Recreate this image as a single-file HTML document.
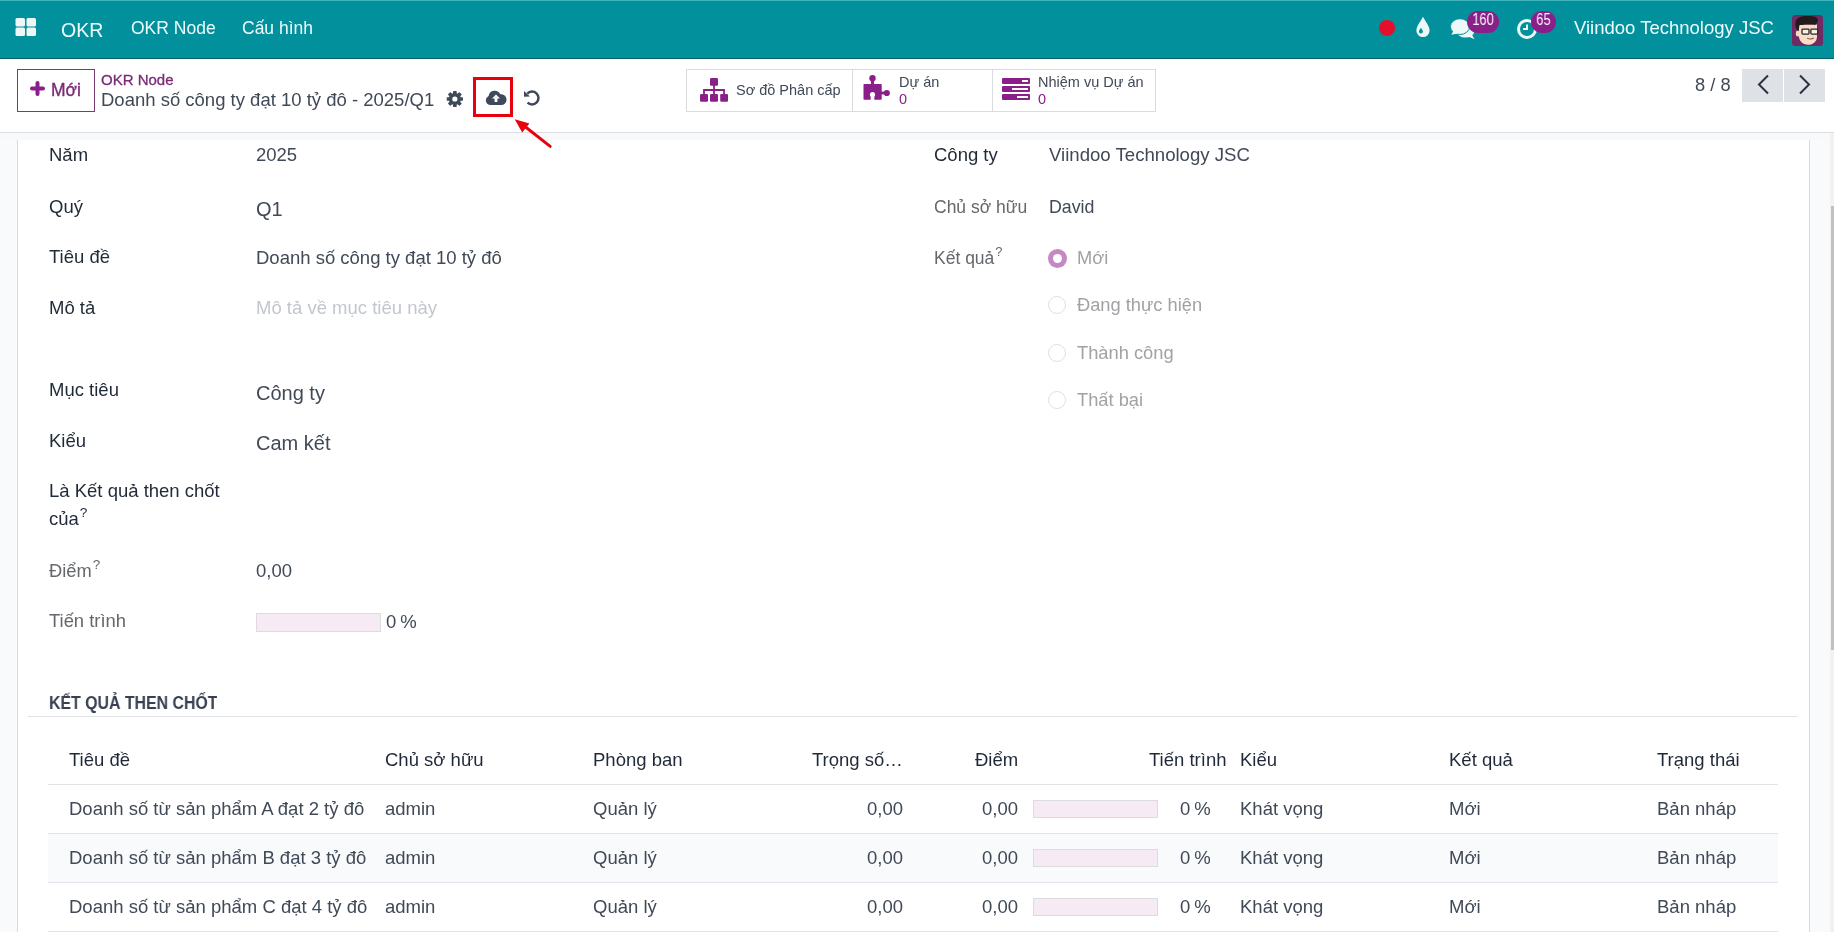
<!DOCTYPE html>
<html><head><meta charset="utf-8"><style>
html,body{margin:0;padding:0;width:1834px;height:932px;overflow:hidden;font-family:'Liberation Sans', sans-serif}
.t{position:absolute;white-space:nowrap;line-height:1;will-change:transform}
sup{font-size:0.74em;vertical-align:0;position:relative;top:-0.62em;margin-left:1px}
</style></head><body>
<div style="position:absolute;left:0px;top:0px;width:1834px;height:932px;background:#f9fafb"></div>
<div style="position:absolute;left:0px;top:0px;width:1834px;height:58px;background:#02909d"></div>
<div style="position:absolute;left:0px;top:0px;width:1834px;height:1px;background:#3db3bb"></div>
<div style="position:absolute;left:0px;top:58px;width:1834px;height:1px;background:#05606a"></div>
<div style="position:absolute;left:0px;top:59px;width:1834px;height:73px;background:#fff"></div>
<div style="position:absolute;left:0px;top:132px;width:1834px;height:1px;background:#dcdde0"></div>
<div style="position:absolute;left:0px;top:133px;width:1834px;height:7px;background:#f8f9fb"></div>
<div style="position:absolute;left:17px;top:140px;width:1793px;height:800px;background:#fff;border-left:1px solid #d8dadd;border-right:1px solid #d8dadd;box-sizing:border-box"></div>
<div style="position:absolute;left:1830px;top:133px;width:4px;height:799px;background:#f1f1f1"></div>
<div style="position:absolute;left:1831px;top:206px;width:3px;height:444px;background:#c1c1c1"></div>
<svg style="position:absolute;left:15px;top:18px" width="22" height="19" viewBox="0 0 22 19"><rect x="0.5" y="0" width="9.5" height="8.5" rx="1.5" fill="#eef6f6"/><rect x="11.5" y="0" width="9.5" height="8.5" rx="1.5" fill="#eef6f6"/><rect x="0.5" y="9.5" width="9.5" height="8.5" rx="1.5" fill="#eef6f6"/><rect x="11.5" y="9.5" width="9.5" height="8.5" rx="1.5" fill="#eef6f6"/></svg>
<div class="t " style="left:61.0px;top:20.9px;font-size:19.5px;color:#eefcfc;font-weight:normal;">OKR</div>
<div class="t " style="left:130.5px;top:20.2px;font-size:17.5px;color:#eefcfc;font-weight:normal;">OKR Node</div>
<div class="t " style="left:241.5px;top:20.2px;font-size:17.5px;color:#eefcfc;font-weight:normal;">Cấu hình</div>
<div style="position:absolute;left:1379px;top:20px;width:16px;height:16px;background:#e3102b;border-radius:50%"></div>
<svg style="position:absolute;left:1415px;top:16px" width="16" height="22" viewBox="0 0 16 22"><path d="M8 0.8 C10 5 14.6 10 14.6 14.5 A6.6 6.6 0 0 1 1.4 14.5 C1.4 10 6 5 8 0.8Z" fill="#eef8f8"/><path d="M5.9 11.8 C6.6 13.3 7.9 14.3 7.9 15.6 A2 2 0 0 1 3.9 15.6 C3.9 14.3 5.2 13.3 5.9 11.8Z" fill="#02909d"/></svg>
<svg style="position:absolute;left:1448px;top:17px" width="30" height="24" viewBox="0 0 30 24"><ellipse cx="17.5" cy="14" rx="8.8" ry="6.6" fill="#eef8f8"/><path d="M19 19 L26.5 22.3 L23.5 17 Z" fill="#eef8f8"/><ellipse cx="12" cy="9.6" rx="9.6" ry="7.9" fill="#eef8f8" stroke="#02909d" stroke-width="1"/><path d="M3.2 17.8 L5.5 14 L10 16.6 Z" fill="#eef8f8"/></svg>
<div style="position:absolute;left:1467px;top:11px;width:32px;height:22px;background:#8a1f8a;border-radius:11px"></div>
<div class="t " style="left:1467.0px;top:12.0px;font-size:16px;color:#fff;font-weight:normal;width:32px;text-align:center;transform:scaleX(0.8)">160</div>
<svg style="position:absolute;left:1516px;top:17px" width="23" height="23" viewBox="0 0 23 23"><circle cx="11" cy="12" r="8.5" fill="none" stroke="#eef6f6" stroke-width="3"/><path d="M11 7.5 V12 H7" fill="none" stroke="#eef6f6" stroke-width="2"/></svg>
<div style="position:absolute;left:1531px;top:11px;width:25px;height:22px;background:#8a1f8a;border-radius:11px"></div>
<div class="t " style="left:1531.0px;top:12.0px;font-size:16px;color:#fff;font-weight:normal;width:25px;text-align:center;transform:scaleX(0.8)">65</div>
<div class="t " style="left:1573.5px;top:19.3px;font-size:18.5px;color:#eefcfc;font-weight:normal;">Viindoo Technology JSC</div>
<svg style="position:absolute;left:1792px;top:14.5px" width="31" height="31" viewBox="1 0.5 31 31"><rect x="1" y="0.5" width="31" height="31" rx="3.5" fill="#702b63"/><ellipse cx="6.8" cy="19" rx="2" ry="3" fill="#f6d9c4"/><path d="M7.8 10 H26 V22 C26 27 22 30.3 17 30.3 C11.5 30.3 7.8 26 7.8 21 Z" fill="#f8dcc6"/><path d="M4.3 10 C4 4 9 1.5 16 1.6 C22 1.5 27 2 27 6 C26 9 25 10.3 24 10.3 C18 9.5 12 10 8.6 10.5 C8 13 7.8 15 7.5 16.8 C6 16 4.6 13 4.3 10 Z" fill="#231a1c"/><rect x="11" y="14.6" width="7" height="5" rx="0.8" fill="#f4f0e8" stroke="#2a2522" stroke-width="1.3"/><rect x="19.9" y="14.6" width="6.8" height="5" rx="0.8" fill="#f4f0e8" stroke="#2a2522" stroke-width="1.3"/><path d="M16.2 23.6 Q19.5 25.6 22.8 23.4" fill="none" stroke="#7b4a42" stroke-width="1.1"/></svg>
<div style="position:absolute;left:17px;top:69px;width:78px;height:43px;border:1px solid #7b3a76;box-sizing:border-box;background:#fff"></div>
<svg style="position:absolute;left:30px;top:81px" width="15" height="15" viewBox="0 0 15 15"><path d="M7.5 2 V13 M2 7.5 H13" stroke="#8a1f8a" stroke-width="4" stroke-linecap="round"/></svg>
<div class="t " style="left:51.0px;top:81.5px;font-size:17.5px;color:#7b2a78;font-weight:normal;-webkit-text-stroke:0.35px #7b2a78">Mới</div>
<div class="t " style="left:101.0px;top:71.6px;font-size:15px;color:#7b2a78;font-weight:normal;-webkit-text-stroke:0.3px #7b2a78">OKR Node</div>
<div class="t " style="left:101.0px;top:90.5px;font-size:18.5px;color:#404957;font-weight:normal;">Doanh số công ty đạt 10 tỷ đô - 2025/Q1</div>
<svg style="position:absolute;left:443px;top:87px" width="24" height="24" viewBox="-11.85 -12 24 24"><circle r="6.1" fill="#3f4a59"/><rect x="-1.8" y="-8.1" width="3.6" height="5" rx="0.6" transform="rotate(0)" fill="#3f4a59"/><rect x="-1.8" y="-8.1" width="3.6" height="5" rx="0.6" transform="rotate(45)" fill="#3f4a59"/><rect x="-1.8" y="-8.1" width="3.6" height="5" rx="0.6" transform="rotate(90)" fill="#3f4a59"/><rect x="-1.8" y="-8.1" width="3.6" height="5" rx="0.6" transform="rotate(135)" fill="#3f4a59"/><rect x="-1.8" y="-8.1" width="3.6" height="5" rx="0.6" transform="rotate(180)" fill="#3f4a59"/><rect x="-1.8" y="-8.1" width="3.6" height="5" rx="0.6" transform="rotate(225)" fill="#3f4a59"/><rect x="-1.8" y="-8.1" width="3.6" height="5" rx="0.6" transform="rotate(270)" fill="#3f4a59"/><rect x="-1.8" y="-8.1" width="3.6" height="5" rx="0.6" transform="rotate(315)" fill="#3f4a59"/><circle r="2.6" fill="#fff"/></svg>
<div style="position:absolute;left:473px;top:77px;width:40px;height:40px;border:3px solid #e8000c;box-sizing:border-box"></div>
<svg style="position:absolute;left:485px;top:89px" width="22" height="17" viewBox="0 0 22 17"><path d="M5 16 A4.8 4.8 0 0 1 3.6 6.9 A6.2 6.2 0 0 1 15.3 5.2 A5.2 5.2 0 0 1 16.8 16 Z" fill="#3f4a59"/><path d="M11 5.5 L15 9.5 H12.4 V13 H9.6 V9.5 H7 Z" fill="#fff"/></svg>
<svg style="position:absolute;left:518px;top:84px" width="28" height="28" viewBox="0 0 28 28"><path d="M9.3 9.6 A6.45 6.45 0 1 1 9.54 18.66" fill="none" stroke="#3f4a59" stroke-width="2.5"/><path d="M6 7 L6 12.8 L11.9 12.5 Z" fill="#3f4a59"/></svg>
<svg style="position:absolute;left:505px;top:110px" width="55" height="45" viewBox="0 0 55 45"><path d="M45.2 36.4 L18 15" stroke="#e8000c" stroke-width="2.9" stroke-linecap="round"/><path d="M9.7 9.3 L24.4 13.4 L17.2 22.4 Z" fill="#e8000c"/></svg>
<div style="position:absolute;left:686px;top:69px;width:470px;height:43px;border:1px solid #d8dbe0;box-sizing:border-box;background:#fff"></div>
<div style="position:absolute;left:852px;top:69px;width:1px;height:43px;background:#d8dbe0"></div>
<div style="position:absolute;left:992px;top:69px;width:1px;height:43px;background:#d8dbe0"></div>
<svg style="position:absolute;left:700px;top:78px" width="28" height="24" viewBox="0 0 28 24"><rect x="10" y="0" width="8" height="7.8" rx="1.3" fill="#8a1f8a"/><rect x="0" y="16" width="8" height="7.8" rx="1.3" fill="#8a1f8a"/><rect x="10" y="16" width="8" height="7.8" rx="1.3" fill="#8a1f8a"/><rect x="20.2" y="16" width="8" height="7.8" rx="1.3" fill="#8a1f8a"/><path d="M14 7 V17 M4 17 V12 H24 V17" fill="none" stroke="#8a1f8a" stroke-width="1.8"/></svg>
<div class="t " style="left:735.5px;top:82.5px;font-size:14.5px;color:#404957;font-weight:normal;">Sơ đồ Phân cấp</div>
<svg style="position:absolute;left:858px;top:72px" width="36" height="32" viewBox="0 0 36 32"><rect x="5.5" y="12" width="18.2" height="15.8" rx="0.8" fill="#8a1f8a"/><rect x="13" y="8" width="3" height="5" fill="#8a1f8a"/><circle cx="14.5" cy="6.3" r="3.2" fill="#8a1f8a"/><rect x="23" y="19.6" width="4" height="2.8" fill="#8a1f8a"/><circle cx="28.8" cy="21" r="3.1" fill="#8a1f8a"/><circle cx="14.5" cy="22.6" r="2.6" fill="#fff"/><rect x="12.7" y="23" width="3.6" height="6" fill="#fff"/></svg>
<div class="t " style="left:898.5px;top:74.5px;font-size:14.5px;color:#404957;font-weight:normal;">Dự án</div>
<div class="t " style="left:898.5px;top:91.8px;font-size:14.5px;color:#8a1f8a;font-weight:normal;">0</div>
<svg style="position:absolute;left:1002px;top:78px" width="28" height="22" viewBox="0 0 28 22"><rect x="0" y="0" width="28" height="6" rx="1" fill="#8a1f8a"/><rect x="0" y="8" width="28" height="6" rx="1" fill="#8a1f8a"/><rect x="0" y="16" width="28" height="6" rx="1" fill="#8a1f8a"/><rect x="20" y="2" width="6" height="2" fill="#fff"/><rect x="10" y="10" width="16" height="2" fill="#fff"/><rect x="15" y="18" width="11" height="2" fill="#fff"/></svg>
<div class="t " style="left:1037.5px;top:74.7px;font-size:14.5px;color:#404957;font-weight:normal;">Nhiệm vụ Dự án</div>
<div class="t " style="left:1037.5px;top:91.6px;font-size:14.5px;color:#8a1f8a;font-weight:normal;">0</div>
<div class="t " style="left:1695.0px;top:76.1px;font-size:18.3px;color:#404957;font-weight:normal;">8 / 8</div>
<div style="position:absolute;left:1742px;top:69px;width:41px;height:33px;background:#dee1e6"></div>
<div style="position:absolute;left:1784px;top:69px;width:41px;height:33px;background:#dee1e6"></div>
<svg style="position:absolute;left:1756px;top:74px" width="14" height="21" viewBox="0 0 14 21"><path d="M12 1.5 L3 10.5 L12 19.5" fill="none" stroke="#2a3140" stroke-width="2"/></svg>
<svg style="position:absolute;left:1798px;top:74px" width="14" height="21" viewBox="0 0 14 21"><path d="M2 1.5 L11 10.5 L2 19.5" fill="none" stroke="#2a3140" stroke-width="2"/></svg>
<div class="t " style="left:48.5px;top:145.9px;font-size:18.5px;color:#1f2937;font-weight:normal;">Năm</div>
<div class="t " style="left:256.0px;top:145.9px;font-size:18.5px;color:#404957;font-weight:normal;">2025</div>
<div class="t " style="left:48.5px;top:197.9px;font-size:18.5px;color:#1f2937;font-weight:normal;">Quý</div>
<div class="t " style="left:256.0px;top:198.7px;font-size:20px;color:#404957;font-weight:normal;">Q1</div>
<div class="t " style="left:48.5px;top:248.2px;font-size:18.5px;color:#1f2937;font-weight:normal;">Tiêu đề</div>
<div class="t " style="left:256.0px;top:248.5px;font-size:18.5px;color:#404957;font-weight:normal;">Doanh số công ty đạt 10 tỷ đô</div>
<div class="t " style="left:48.5px;top:299.1px;font-size:18.5px;color:#1f2937;font-weight:normal;">Mô tả</div>
<div class="t " style="left:256.0px;top:299.2px;font-size:18.5px;color:#c2c7ce;font-weight:normal;">Mô tả về mục tiêu này</div>
<div class="t " style="left:48.5px;top:380.9px;font-size:18.5px;color:#1f2937;font-weight:normal;">Mục tiêu</div>
<div class="t " style="left:256.0px;top:382.7px;font-size:20px;color:#404957;font-weight:normal;">Công ty</div>
<div class="t " style="left:48.5px;top:431.6px;font-size:18.5px;color:#1f2937;font-weight:normal;">Kiểu</div>
<div class="t " style="left:256.0px;top:432.5px;font-size:20px;color:#404957;font-weight:normal;">Cam kết</div>
<div class="t " style="left:48.5px;top:482.3px;font-size:18.5px;color:#1f2937;font-weight:normal;">Là Kết quả then chốt</div>
<div class="t " style="left:48.5px;top:509.9px;font-size:18.5px;color:#1f2937;font-weight:normal;">của<sup>?</sup></div>
<div class="t " style="left:48.5px;top:562.1px;font-size:18.3px;color:#64676b;font-weight:normal;">Điểm<sup>?</sup></div>
<div class="t " style="left:256.0px;top:561.9px;font-size:18.5px;color:#404957;font-weight:normal;">0,00</div>
<div class="t " style="left:48.5px;top:612.2px;font-size:18.4px;color:#64676b;font-weight:normal;">Tiến trình</div>
<div style="position:absolute;left:256px;top:613px;width:125px;height:19px;background:#f6eaf5;border:1px solid #dcdcdc;box-sizing:border-box"></div>
<div class="t " style="left:386.0px;top:612.9px;font-size:18.5px;color:#404957;font-weight:normal;word-spacing:-1.2px">0 %</div>
<div class="t " style="left:934.0px;top:145.9px;font-size:18.5px;color:#1f2937;font-weight:normal;">Công ty</div>
<div class="t " style="left:1049.0px;top:145.8px;font-size:18.6px;color:#404957;font-weight:normal;">Viindoo Technology JSC</div>
<div class="t " style="left:934.0px;top:198.7px;font-size:17.5px;color:#64676b;font-weight:normal;">Chủ sở hữu</div>
<div class="t " style="left:1049.0px;top:198.5px;font-size:17.8px;color:#404957;font-weight:normal;">David</div>
<div class="t " style="left:934.0px;top:249.5px;font-size:17.5px;color:#64676b;font-weight:normal;">Kết quả<sup>?</sup></div>
<div style="position:absolute;left:1048px;top:248.5px;width:19px;height:19px;border-radius:50%;background:#c688c3"></div>
<div style="position:absolute;left:1053px;top:253.5px;width:9px;height:9px;border-radius:50%;background:#fff"></div>
<div style="position:absolute;left:1048px;top:296px;width:18px;height:18px;border-radius:50%;border:1px solid #dfe1e5;box-sizing:border-box;background:#fff"></div>
<div style="position:absolute;left:1048px;top:344px;width:18px;height:18px;border-radius:50%;border:1px solid #dfe1e5;box-sizing:border-box;background:#fff"></div>
<div style="position:absolute;left:1048px;top:391px;width:18px;height:18px;border-radius:50%;border:1px solid #dfe1e5;box-sizing:border-box;background:#fff"></div>
<div class="t " style="left:1077.0px;top:248.9px;font-size:18.3px;color:#a0a2a5;font-weight:normal;">Mới</div>
<div class="t " style="left:1077.0px;top:296.3px;font-size:18.3px;color:#a0a2a5;font-weight:normal;">Đang thực hiện</div>
<div class="t " style="left:1077.0px;top:343.8px;font-size:18.3px;color:#a0a2a5;font-weight:normal;">Thành công</div>
<div class="t " style="left:1077.0px;top:390.9px;font-size:18.3px;color:#a0a2a5;font-weight:normal;">Thất bại</div>
<div class="t " style="left:49.0px;top:694.3px;font-size:18px;color:#374151;font-weight:bold;transform:scaleX(0.882);transform-origin:0 0">KẾT QUẢ THEN CHỐT</div>
<div style="position:absolute;left:28px;top:716px;width:1770px;height:1px;background:#dfe2e6"></div>
<div style="position:absolute;left:48px;top:784px;width:1730px;height:1px;background:#dfe2e6"></div>
<div style="position:absolute;left:48px;top:834px;width:1730px;height:48px;background:#f9fafb"></div>
<div style="position:absolute;left:48px;top:833px;width:1730px;height:1px;background:#dfe2e6"></div>
<div style="position:absolute;left:48px;top:882px;width:1730px;height:1px;background:#dfe2e6"></div>
<div style="position:absolute;left:48px;top:931px;width:1730px;height:1px;background:#dfe2e6"></div>
<div class="t " style="left:68.5px;top:750.9px;font-size:18.5px;color:#1f2937;font-weight:normal;">Tiêu đề</div>
<div class="t " style="left:384.5px;top:750.9px;font-size:18.5px;color:#1f2937;font-weight:normal;">Chủ sở hữu</div>
<div class="t " style="left:593.0px;top:750.9px;font-size:18.5px;color:#1f2937;font-weight:normal;">Phòng ban</div>
<div class="t " style="right:931.5px;top:750.9px;font-size:18.5px;color:#1f2937;font-weight:normal;">Trọng số…</div>
<div class="t " style="right:815.5px;top:750.9px;font-size:18.5px;color:#1f2937;font-weight:normal;">Điểm</div>
<div class="t " style="right:607.5px;top:750.9px;font-size:18.5px;color:#1f2937;font-weight:normal;">Tiến trình</div>
<div class="t " style="left:1239.5px;top:750.9px;font-size:18.5px;color:#1f2937;font-weight:normal;">Kiểu</div>
<div class="t " style="left:1449.0px;top:750.9px;font-size:18.5px;color:#1f2937;font-weight:normal;">Kết quả</div>
<div class="t " style="left:1657.0px;top:750.9px;font-size:18.5px;color:#1f2937;font-weight:normal;width:81.5px;overflow:hidden">Trạng thái</div>
<div class="t " style="left:68.5px;top:799.9px;font-size:18.5px;color:#404957;font-weight:normal;">Doanh số từ sản phẩm A đạt 2 tỷ đô</div>
<div class="t " style="left:384.5px;top:799.9px;font-size:18.5px;color:#404957;font-weight:normal;">admin</div>
<div class="t " style="left:593.0px;top:799.9px;font-size:18.5px;color:#404957;font-weight:normal;">Quản lý</div>
<div class="t " style="right:930.5px;top:799.9px;font-size:18.5px;color:#404957;font-weight:normal;">0,00</div>
<div class="t " style="right:815.5px;top:799.9px;font-size:18.5px;color:#404957;font-weight:normal;">0,00</div>
<div style="position:absolute;left:1033px;top:800px;width:125px;height:18px;background:#f6eaf5;border:1px solid #dcdcdc;box-sizing:border-box"></div>
<div class="t " style="right:623.0px;top:799.9px;font-size:18.5px;color:#404957;font-weight:normal;word-spacing:-1.2px">0 %</div>
<div class="t " style="left:1239.5px;top:799.9px;font-size:18.5px;color:#404957;font-weight:normal;">Khát vọng</div>
<div class="t " style="left:1449.0px;top:799.9px;font-size:18.5px;color:#404957;font-weight:normal;">Mới</div>
<div class="t " style="left:1657.0px;top:799.9px;font-size:18.5px;color:#404957;font-weight:normal;">Bản nháp</div>
<div class="t " style="left:68.5px;top:848.9px;font-size:18.5px;color:#404957;font-weight:normal;">Doanh số từ sản phẩm B đạt 3 tỷ đô</div>
<div class="t " style="left:384.5px;top:848.9px;font-size:18.5px;color:#404957;font-weight:normal;">admin</div>
<div class="t " style="left:593.0px;top:848.9px;font-size:18.5px;color:#404957;font-weight:normal;">Quản lý</div>
<div class="t " style="right:930.5px;top:848.9px;font-size:18.5px;color:#404957;font-weight:normal;">0,00</div>
<div class="t " style="right:815.5px;top:848.9px;font-size:18.5px;color:#404957;font-weight:normal;">0,00</div>
<div style="position:absolute;left:1033px;top:849px;width:125px;height:18px;background:#f6eaf5;border:1px solid #dcdcdc;box-sizing:border-box"></div>
<div class="t " style="right:623.0px;top:848.9px;font-size:18.5px;color:#404957;font-weight:normal;word-spacing:-1.2px">0 %</div>
<div class="t " style="left:1239.5px;top:848.9px;font-size:18.5px;color:#404957;font-weight:normal;">Khát vọng</div>
<div class="t " style="left:1449.0px;top:848.9px;font-size:18.5px;color:#404957;font-weight:normal;">Mới</div>
<div class="t " style="left:1657.0px;top:848.9px;font-size:18.5px;color:#404957;font-weight:normal;">Bản nháp</div>
<div class="t " style="left:68.5px;top:897.9px;font-size:18.5px;color:#404957;font-weight:normal;">Doanh số từ sản phẩm C đạt 4 tỷ đô</div>
<div class="t " style="left:384.5px;top:897.9px;font-size:18.5px;color:#404957;font-weight:normal;">admin</div>
<div class="t " style="left:593.0px;top:897.9px;font-size:18.5px;color:#404957;font-weight:normal;">Quản lý</div>
<div class="t " style="right:930.5px;top:897.9px;font-size:18.5px;color:#404957;font-weight:normal;">0,00</div>
<div class="t " style="right:815.5px;top:897.9px;font-size:18.5px;color:#404957;font-weight:normal;">0,00</div>
<div style="position:absolute;left:1033px;top:898px;width:125px;height:18px;background:#f6eaf5;border:1px solid #dcdcdc;box-sizing:border-box"></div>
<div class="t " style="right:623.0px;top:897.9px;font-size:18.5px;color:#404957;font-weight:normal;word-spacing:-1.2px">0 %</div>
<div class="t " style="left:1239.5px;top:897.9px;font-size:18.5px;color:#404957;font-weight:normal;">Khát vọng</div>
<div class="t " style="left:1449.0px;top:897.9px;font-size:18.5px;color:#404957;font-weight:normal;">Mới</div>
<div class="t " style="left:1657.0px;top:897.9px;font-size:18.5px;color:#404957;font-weight:normal;">Bản nháp</div>
</body></html>
